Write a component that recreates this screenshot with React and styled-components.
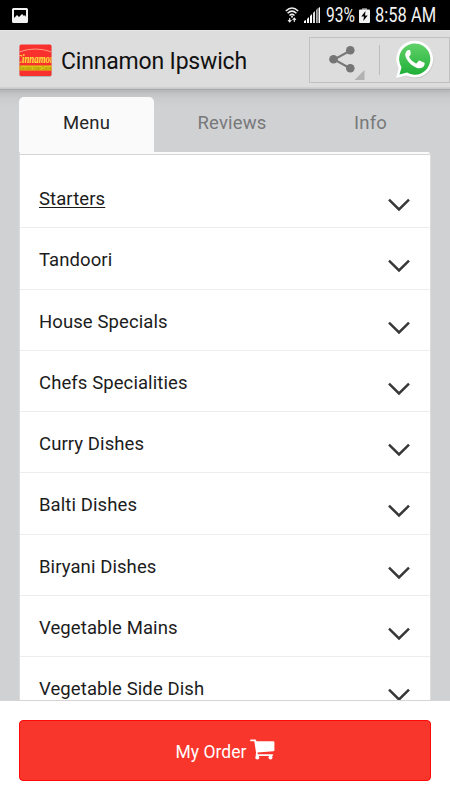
import React from "react";
import styled, { createGlobalStyle } from "styled-components";

const GlobalStyle = createGlobalStyle`
  * { box-sizing: border-box; }
  body { margin: 0; background: #fff; }
`;

const Screen = styled.div`
  width: 450px;
  height: 800px;
  display: flex;
  flex-direction: column;
  overflow: hidden;
  background: #fff;
  font-family: Roboto, "Liberation Sans", sans-serif;
  color: #111;
  svg { display: block; flex: none; }
`;

const StatusBar = styled.div`
  height: 30px;
  flex: none;
  display: flex;
  align-items: center;
  background: #000;
  padding: 0 14px 0 12px;
`;

const StatusIcons = styled.div`
  margin-left: auto;
  display: flex;
  align-items: center;
`;

const SignalGroup = styled.div`
  display: flex;
  gap: 5px;
`;

const BatterySlot = styled.div`
  margin-left: 3px;
`;

const StatusText = styled.span`
  font-size: 20px;
  line-height: 30px;
  width: ${(p) => p.$width}px;
  margin-left: ${(p) => p.$gap}px;
  white-space: nowrap;
  color: #f4f4f4;
  & > span {
    display: inline-block;
    transform: scaleX(${(p) => p.$scale});
    transform-origin: left center;
  }
`;

const Header = styled.header`
  height: 60px;
  flex: none;
  display: flex;
  align-items: flex-start;
  padding: 7px 0 0 19px;
  background: linear-gradient(#e5e5e5 0 1px, #ddd 1px 57px, #d0d0d0 57px 58px, #c9c9c9 58px 59px, #a9aaac 59px);
`;

const Logo = styled.div`
  width: 33px;
  height: 33px;
  margin-top: 7px;
`;

const Title = styled.h1`
  margin: 0 0 0 9px;
  font-size: 23px;
  font-weight: 400;
  line-height: 49px;
  letter-spacing: -0.18px;
  color: #111;
  white-space: nowrap;
`;

const ShareActions = styled.div`
  margin-left: auto;
  width: 141px;
  height: 46px;
  display: flex;
  align-items: center;
  border: 1px solid #c0c0c0;
`;

const ShareButton = styled.div`
  width: 70px;
  height: 30px;
  border-right: 1px solid #bdbdbd;
`;

const ShareSlot = styled.div`
  height: 46px;
  margin-top: -8px;
`;

const WhatsAppSlot = styled.div`
  margin-left: 14px;
`;

const Content = styled.main`
  height: 610px;
  flex: none;
  display: flex;
  flex-direction: column;
  overflow: hidden;
  padding: 7px 19px 0;
  background: linear-gradient(#b5b6b8 0, #c3c4c6 4px, #cbccce 9px, #d0d1d3 17px);
`;

const Tabs = styled.nav`
  height: 55px;
  flex: none;
  display: flex;
`;

const Tab = styled.div`
  width: ${(p) => p.$width}px;
  height: 100%;
  padding-top: 2px;
  text-align: center;
  font-size: 18.5px;
  line-height: 49px;
  letter-spacing: 0.15px;
  border-radius: 5px 5px 0 0;
  color: ${(p) => (p.$active ? "#262626" : "#77787a")};
  background: ${(p) => (p.$active ? "#fafafa" : "transparent")};
`;

const Panel = styled.section`
  flex: 1;
  overflow: hidden;
  background: #fff;
  border: 1px solid #dcdcdd;
  border-top: 0;
  border-bottom: 0;
  border-radius: 0 4px 0 0;
`;

const PanelRule = styled.div`
  height: 3px;
  background: #fafafa;
  border-bottom: 1px solid #d5d5d6;
`;

const List = styled.ul`
  margin: 0;
  padding: 12px 0 0;
  list-style: none;
`;

const Row = styled.li`
  height: 61.3px;
  display: flex;
  justify-content: space-between;
  padding: 0 20px 0 19px;
  border-bottom: 1px solid #ededed;
  svg { margin-top: 31px; }
`;

const RowLabel = styled.span`
  font-size: 18.5px;
  line-height: 64px;
  letter-spacing: 0.09px;
  color: #1c1c1c;
  text-decoration: ${(p) => (p.$underlined ? "underline" : "none")};
  text-underline-offset: 2px;
  text-decoration-thickness: 1px;
`;

const Footer = styled.footer`
  flex: 1;
  padding: 19px 19px 0;
  background: #fff;
  border-top: 1px solid #d5d5d6;
`;

const OrderButton = styled.button`
  width: 412px;
  height: 61px;
  padding: 2px 0 0 1px;
  display: flex;
  align-items: center;
  justify-content: center;
  gap: 4px;
  border: 1px solid #fc0b08;
  border-radius: 4px;
  background: #f9362b;
  color: #fff;
  font: 400 17.5px Roboto, sans-serif;
  svg { margin-top: -5px; }
`;

const PictureIcon = () => (
  <svg width="16" height="15" viewBox="0 0 16 15">
    <path fill="#f2f2f2" fillRule="evenodd" d="M1.5 0h13Q16 0 16 1.5v12q0 1.5-1.5 1.5h-13Q0 15 0 13.500v-12Q0 0 1.500 0ZM2 2v8l3-3 2 2 3-3 2 2 1-1 1 2V2Z" />
  </svg>
);

const WifiIcon = () => (
  <svg width="14" height="16" viewBox="0 0 14 16" fill="none" stroke="#eee" strokeWidth="1.5">
    <path d="M.8 4Q7-2 13.200 4M2.600 6.300Q7 2 11.400 6.300M4.500 8.500Q7 6.300 9.500 8.500" />
    <circle cx="7" cy="9.800" r="1" fill="#eee" stroke="none" />
    <path d="M4.700 15v-4M3 13l1.700 2 1.700-2M9.300 11v4M7.600 13l1.700-2 1.700 2" strokeWidth="1.100" />
  </svg>
);

const SignalIcon = () => (
  <svg width="16" height="16" viewBox="0 0 16 16">
    <path fill="#fff" d="M0 16v-2l2-1v3ZM3 16v-4l2-2v6ZM6 16V9l2-2v9Z" />
    <path fill="#ddd" d="M9 16V6l2-2v12Z" />
    <path fill="#aaa" d="M12 16V3l1.800-2v15Z" />
    <path fill="#fff" d="M14.500 1 16 0v16h-1.500Z" />
  </svg>
);

const BatteryIcon = () => (
  <svg width="11" height="15" viewBox="0 0 11 15">
    <path fill="#777" d="M3 0h5v2H3z" />
    <path fill="#f2f2f2" d="M1 1.500h9q1 0 1 1V14q0 1-1 1H1q-1 0-1-1V2.500q0-1 1-1Z" />
    <path fill="#000" d="M6.500 3 2.300 8.600H5L4.300 13 8.700 7.400H6Z" />
  </svg>
);

const CinnamonLogo = () => (
  <svg width="33" height="33" viewBox="0 0 33 33">
    <defs>
      <clipPath id="logoClip"><rect x="0.500" y="0.500" width="32" height="31.500" rx="1.500" /></clipPath>
    </defs>
    <rect x="0.500" y="1" width="32" height="32" rx="2" fill="#aeb5b5" />
    <g clipPath="url(#logoClip)">
      <path fill="#f8312f" d="M0 0h33v33H0z" />
      <path d="M0 8Q16 2 33 8" fill="none" stroke="#ff9c83" strokeWidth="1" />
      <text x="-3" y="18.500" textLength="39" lengthAdjust="spacingAndGlyphs" fontFamily="Liberation Serif, serif" fontSize="12.500" fontStyle="italic" fontWeight="700" fill="#ffe43b">Cinnamon</text>
      <path fill="#dfcb16" d="M0 21.500h33v5H0z" />
      <text x="0.500" y="25.700" textLength="32" lengthAdjust="spacingAndGlyphs" fontFamily="Liberation Sans, sans-serif" fontSize="4.500" fill="#a07a00">Specialist Indian Cuisine</text>
    </g>
  </svg>
);

const ShareIcon = () => (
  <svg width="66" height="46" viewBox="4 0 66 46">
    <path d="M44.500 13.500 28 22.500l16.500 9" fill="none" stroke="#777" strokeWidth="2" />
    <g fill="#757575">
      <circle cx="44.300" cy="13.300" r="4.300" />
      <circle cx="27.500" cy="22.300" r="4.300" />
      <circle cx="44.300" cy="31.300" r="4.300" />
    </g>
    <path fill="#b2b2b2" d="M58.500 33v10h-10Z" />
  </svg>
);

const WhatsAppIcon = () => (
  <svg width="42" height="42" viewBox="0 0 42 42">
    <defs>
      <linearGradient id="green" x1="0" y1="0" x2="0" y2="1">
        <stop offset="0" stopColor="#61d169" />
        <stop offset="1" stopColor="#20b038" />
      </linearGradient>
    </defs>
    <path d="M2.300 39.800 5 29.700A18.400 18.400 0 1 1 12.300 37Z" fill="#c5c5c5" />
    <path d="M2 39.200 4.700 29.200A18.400 18.400 0 1 1 12.300 36.500Z" fill="#fff" />
    <path d="M5.500 35.600 7.500 28.300A15.600 15.600 0 1 1 13 33.600Z" fill="url(#green)" />
    <path d="M16.400 11.800c-.4-.9-.8-.9-1.200-.9-1.100-.1-1.900.3-2.500 1-1.400 1.500-1.700 3.400-1.200 5.400 1.200 4.700 6.400 10 11.500 11.600 3.100 1 6 .2 7.200-2.300.4-.9.6-2.100.4-2.500-.2-.3-.8-.6-1.200-.8l-3.500-1.600c-.6-.3-1-.2-1.400.3l-1.600 2c-.4.500-.7.500-1.300.2-2.700-1.300-4.900-3.200-6.300-5.900-.3-.5-.2-.8.200-1.200.6-.7 1.300-1.300 1.200-2Z" fill="#fff" />
  </svg>
);

const Chevron = () => (
  <svg width="22" height="14" viewBox="0 0 22 14" fill="none" stroke="#383838" strokeWidth="2.500">
    <path d="M1 1.700 11 11.500 21 1.700" />
  </svg>
);

const CartIcon = () => (
  <svg width="25" height="21" viewBox="0 0 25 21" fill="#fff">
    <path d="M1 .5h4.200q.8 0 1 .9l.2 .8h17q1 0 1 1v8q0 .9-1 1.100L7.500 13.500l.3 1.800h14.500q.9 0 .9.800t-.9.800H6.500q-1.100 0-.9-1l.5-1.800L4.300 2.300H1Q.1 2.300.1 1.400T1 .5Z" />
    <circle cx="7.300" cy="18.500" r="2" />
    <circle cx="20.500" cy="18.500" r="2" />
  </svg>
);

const categories = [
  "Starters",
  "Tandoori",
  "House Specials",
  "Chefs Specialities",
  "Curry Dishes",
  "Balti Dishes",
  "Biryani Dishes",
  "Vegetable Mains",
  "Vegetable Side Dish",
];

export default function App() {
  return (
    <>
      <GlobalStyle />
      <Screen>
        <StatusBar>
          <PictureIcon />
          <StatusIcons>
            <SignalGroup>
              <WifiIcon />
              <SignalIcon />
            </SignalGroup>
            <StatusText $width={30} $gap={6} $scale={0.78}><span>93%</span></StatusText>
            <BatterySlot><BatteryIcon /></BatterySlot>
            <StatusText $width={61} $gap={5} $scale={0.825}><span>8:58 AM</span></StatusText>
          </StatusIcons>
        </StatusBar>
        <Header>
          <Logo><CinnamonLogo /></Logo>
          <Title>Cinnamon Ipswich</Title>
          <ShareActions>
            <ShareButton><ShareSlot><ShareIcon /></ShareSlot></ShareButton>
            <WhatsAppSlot><WhatsAppIcon /></WhatsAppSlot>
          </ShareActions>
        </Header>
        <Content>
          <Tabs>
            <Tab $width={135} $active>Menu</Tab>
            <Tab $width={156}>Reviews</Tab>
            <Tab $width={121}>Info</Tab>
          </Tabs>
          <Panel>
            <PanelRule />
            <List>
              {categories.map((name, i) => (
                <Row key={name}>
                  <RowLabel $underlined={i === 0}>{name}</RowLabel>
                  <Chevron />
                </Row>
              ))}
            </List>
          </Panel>
        </Content>
        <Footer>
          <OrderButton>
            My Order
            <CartIcon />
          </OrderButton>
        </Footer>
      </Screen>
    </>
  );
}
